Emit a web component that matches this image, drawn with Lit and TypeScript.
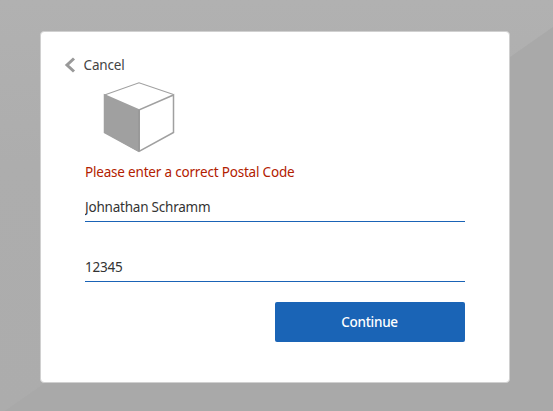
import { LitElement, html, css } from "lit";
import { customElement, state } from "lit/decorators.js";

@customElement("app-root")
class AppRoot extends LitElement {
  @state() name = "Johnathan Schramm";
  @state() postalCode = "12345";

  static styles = css`
    :host {
      display: block;
      position: relative;
      box-sizing: border-box;
      height: 100vh;
      overflow: hidden;
      padding: 31px 43px 0 40px;
      background: linear-gradient(#b1b1b1, #adadad 40%, #acacac);
      font: 13.5px/20px "Noto Sans", "Open Sans", sans-serif;
      color: #333;
    }
    .shade {
      position: absolute;
      inset: 0;
      background: #a9a9a9;
      clip-path: polygon(553px 27px, 553px 411px, 5px 411px);
    }
    .card {
      position: relative;
      box-sizing: border-box;
      width: 470px;
      height: 352px;
      padding: 23px 44px 0;
      background: #fff;
      border: 1px solid #d0d0d0;
      border-radius: 4px;
    }
    .cancel {
      display: flex;
      align-items: center;
      gap: 7.5px;
      height: 20px;
      margin-left: -21px;
      color: #444;
      letter-spacing: -0.15px;
    }
    .cube {
      display: block;
      margin: 6px 0 0 18px;
    }
    .error {
      margin-top: 9px;
      color: #b22000;
      letter-spacing: -0.19px;
    }
    .field {
      display: block;
      box-sizing: border-box;
      width: 380px;
      height: 30px;
      margin: 10px 0 0;
      padding: 0;
      border: 0;
      border-bottom: 1px solid #1a63b6;
      border-radius: 0;
      outline: 0;
      background: none;
      color: inherit;
      font: inherit;
      letter-spacing: -0.22px;
    }
    .postal {
      margin-top: 30px;
    }
    .submit {
      display: block;
      width: 190px;
      height: 40px;
      margin: 20px 0 0 190px;
      padding: 0 1px 0 0;
      border: 0;
      border-radius: 2px;
      background: #1a64b6;
      color: #fff;
      font: inherit;
      font-weight: 500;
      letter-spacing: -0.27px;
    }
  `;

  render() {
    return html`
      <div class="shade"></div>
      <main class="card">
        <div class="cancel">
          <svg width="12" height="16" viewBox="0 0 12 16">
            <path d="M10 1.5 3 8l7 6.5" fill="none" stroke="#999" stroke-width="3" />
          </svg>
          <span>Cancel</span>
        </div>
        <svg class="cube" width="72" height="72" viewBox="0 0 72 72">
          <path d="M1.5 14v37.5L36 71V29z" fill="#a0a0a0" />
          <path d="M1.5 14 36 1.8l34.5 11.7" fill="none" stroke="#a0a0a0" stroke-width="1.1" />
          <path d="M1.5 14v37.5L36 70.3l34.5-18.8V14L36 29z" fill="none" stroke="#a0a0a0" stroke-width="1.5" />
          <path d="M36 29v41" stroke="#999" stroke-width="2" />
        </svg>
        <div class="error">Please enter a correct Postal Code</div>
        <input class="field" .value=${this.name} />
        <input class="field postal" .value=${this.postalCode} />
        <button class="submit">Continue</button>
      </main>
    `;
  }
}
